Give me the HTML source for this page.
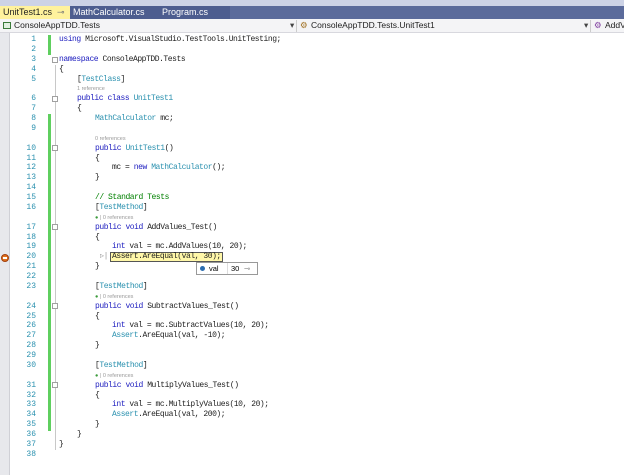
<!DOCTYPE html>
<html><head><meta charset="utf-8"><style>
*{margin:0;padding:0;box-sizing:border-box}
body{width:624px;height:475px;overflow:hidden;background:#fff;font-family:"Liberation Sans",sans-serif;position:relative}
.tabbar{position:absolute;left:0;top:0;width:624px;height:19px;background:#5b6b9b}
.tabbar .hi{position:absolute;top:0;left:0;width:624px;height:6px;background:#cdd3e6}
.tab{position:absolute;top:6px;height:13px;font-size:9px;line-height:13px;padding-left:3px;color:#fff}
.nav{position:absolute;top:19px;left:0;width:624px;height:14px;background:#f4f4f6;border-bottom:1px solid #d8d8de;font-size:8.5px;line-height:13px;color:#1e1e1e}
.strip{position:absolute;left:0;top:33px;width:10px;height:442px;background:#e7e8ec;border-right:1px solid #cfd0d6}
.code{position:absolute;left:0;top:35px;width:624px;font-family:"Liberation Mono",monospace;font-size:8px;letter-spacing:-0.45px}
.r{height:9.88px;line-height:9.88px;position:relative;white-space:pre}
.n{position:absolute;left:10px;width:26px;text-align:right;color:#2b91af;letter-spacing:0}
.t{position:absolute;left:59px;color:#1e1e1e}
.ref{font-family:"Liberation Sans",sans-serif;font-size:5.5px;color:#999;letter-spacing:0}
.k{color:#2020c0}.ty{color:#2b91af}.c{color:#008000}
.g{position:absolute;left:48px;width:3px;background:#5fcf5f}
.box{position:absolute;left:52px;width:6px;height:6px;border:1px solid #a0a0a0;background:#fff}
</style></head><body>
<div class="tabbar"><div class="hi"></div>
<div class="tab" style="left:0;width:70px;background:#fff29d;color:#1e1e1e">UnitTest1.cs &nbsp;<span style="color:#777">⊸</span> <span style="color:#444">✕</span></div>
<div class="tab" style="left:70px;width:90px;background:#4d5d8f">MathCalculator.cs</div>
<div class="tab" style="left:160px;width:70px;background:#4d5d8f;padding-left:2px">Program.cs</div>
</div>
<div class="nav">
<span style="position:absolute;left:3px;top:3px;width:8px;height:7px;border:1px solid #3a7a3a;background:#e0f0e0"></span>
<span style="position:absolute;left:14px">ConsoleAppTDD.Tests</span>
<span style="position:absolute;left:290px;color:#444">▾</span>
<span style="position:absolute;left:296px;top:1px;width:1px;height:12px;background:#ccc"></span>
<span style="position:absolute;left:300px;color:#a07020">⚙</span>
<span style="position:absolute;left:311px">ConsoleAppTDD.Tests.UnitTest1</span>
<span style="position:absolute;left:584px;color:#444">▾</span>
<span style="position:absolute;left:590px;top:1px;width:1px;height:12px;background:#ccc"></span>
<span style="position:absolute;left:594px;color:#8040a0">⚙</span>
<span style="position:absolute;left:605px">AddV</span>
</div>
<div class="strip"></div>
<div class="g" style="top:35px;height:20px"></div>
<div class="g" style="top:114px;height:317px"></div>
<div style="position:absolute;left:1px;top:254px;width:8px;height:8px;border-radius:50%;background:#e0701a;border:1px solid #a04010"></div>
<div style="position:absolute;left:3px;top:257px;width:4px;height:2px;background:#fff"></div>
<div style="position:absolute;left:55px;top:65px;width:1px;height:385px;background:#c8c8c8"></div>
<div class="box" style="top:57px"></div><div class="box" style="top:96px"></div><div class="box" style="top:145px"></div>
<div class="box" style="top:224px"></div><div class="box" style="top:303px"></div><div class="box" style="top:382px"></div>
<div style="position:absolute;left:110px;top:252px;width:113px;height:10px;background:#fff7a8;border:1px solid #555"></div>
<div style="position:absolute;left:196px;top:262px;width:62px;height:13px;background:#fff;border:1px solid #999;font-size:7.5px;line-height:11px">
<span style="position:absolute;left:3px;top:3px;width:5px;height:5px;border-radius:50%;background:#2b6cb0"></span>
<span style="position:absolute;left:12px">val</span>
<span style="position:absolute;left:30px;top:0;width:1px;height:11px;background:#ddd"></span>
<span style="position:absolute;left:34px">30</span><span style="position:absolute;left:47px;color:#888">⊸</span></div>
<div class="code">
<div class="r"><span class="n">1</span><span class="t"><span class="k">using</span> Microsoft.VisualStudio.TestTools.UnitTesting;</span></div>
<div class="r"><span class="n">2</span></div>
<div class="r"><span class="n">3</span><span class="t"><span class="k">namespace</span> ConsoleAppTDD.Tests</span></div>
<div class="r"><span class="n">4</span><span class="t">{</span></div>
<div class="r"><span class="n">5</span><span class="t" style="left:77px">[<span class="ty">TestClass</span>]</span></div>
<div class="r"><span class="t" style="left:77px"><span class="ref">1 reference</span></span></div>
<div class="r"><span class="n">6</span><span class="t" style="left:77px"><span class="k">public class</span> <span class="ty">UnitTest1</span></span></div>
<div class="r"><span class="n">7</span><span class="t" style="left:77px">{</span></div>
<div class="r"><span class="n">8</span><span class="t" style="left:95px"><span class="ty">MathCalculator</span> mc;</span></div>
<div class="r"><span class="n">9</span></div>
<div class="r"><span class="t" style="left:95px"><span class="ref">0 references</span></span></div>
<div class="r"><span class="n">10</span><span class="t" style="left:95px"><span class="k">public</span> <span class="ty">UnitTest1</span>()</span></div>
<div class="r"><span class="n">11</span><span class="t" style="left:95px">{</span></div>
<div class="r"><span class="n">12</span><span class="t" style="left:112px">mc = <span class="k">new</span> <span class="ty">MathCalculator</span>();</span></div>
<div class="r"><span class="n">13</span><span class="t" style="left:95px">}</span></div>
<div class="r"><span class="n">14</span></div>
<div class="r"><span class="n">15</span><span class="t" style="left:95px"><span class="c">// Standard Tests</span></span></div>
<div class="r"><span class="n">16</span><span class="t" style="left:95px">[<span class="ty">TestMethod</span>]</span></div>
<div class="r"><span class="t" style="left:95px"><span class="ref"><span style="color:#3a9a3a">●</span> | 0 references</span></span></div>
<div class="r"><span class="n">17</span><span class="t" style="left:95px"><span class="k">public void</span> AddValues_Test()</span></div>
<div class="r"><span class="n">18</span><span class="t" style="left:95px">{</span></div>
<div class="r"><span class="n">19</span><span class="t" style="left:112px"><span class="k">int</span> val = mc.AddValues(10, 20);</span></div>
<div class="r"><span class="n">20</span><span class="t" style="left:100px;color:#999">▹|</span><span class="t" style="left:112px">Assert.AreEqual(val, 30);</span></div>
<div class="r"><span class="n">21</span><span class="t" style="left:95px">}</span></div>
<div class="r"><span class="n">22</span></div>
<div class="r"><span class="n">23</span><span class="t" style="left:95px">[<span class="ty">TestMethod</span>]</span></div>
<div class="r"><span class="t" style="left:95px"><span class="ref"><span style="color:#3a9a3a">●</span> | 0 references</span></span></div>
<div class="r"><span class="n">24</span><span class="t" style="left:95px"><span class="k">public void</span> SubtractValues_Test()</span></div>
<div class="r"><span class="n">25</span><span class="t" style="left:95px">{</span></div>
<div class="r"><span class="n">26</span><span class="t" style="left:112px"><span class="k">int</span> val = mc.SubtractValues(10, 20);</span></div>
<div class="r"><span class="n">27</span><span class="t" style="left:112px"><span class="ty">Assert</span>.AreEqual(val, -10);</span></div>
<div class="r"><span class="n">28</span><span class="t" style="left:95px">}</span></div>
<div class="r"><span class="n">29</span></div>
<div class="r"><span class="n">30</span><span class="t" style="left:95px">[<span class="ty">TestMethod</span>]</span></div>
<div class="r"><span class="t" style="left:95px"><span class="ref"><span style="color:#3a9a3a">●</span> | 0 references</span></span></div>
<div class="r"><span class="n">31</span><span class="t" style="left:95px"><span class="k">public void</span> MultiplyValues_Test()</span></div>
<div class="r"><span class="n">32</span><span class="t" style="left:95px">{</span></div>
<div class="r"><span class="n">33</span><span class="t" style="left:112px"><span class="k">int</span> val = mc.MultiplyValues(10, 20);</span></div>
<div class="r"><span class="n">34</span><span class="t" style="left:112px"><span class="ty">Assert</span>.AreEqual(val, 200);</span></div>
<div class="r"><span class="n">35</span><span class="t" style="left:95px">}</span></div>
<div class="r"><span class="n">36</span><span class="t" style="left:77px">}</span></div>
<div class="r"><span class="n">37</span><span class="t">}</span></div>
<div class="r"><span class="n">38</span></div>
</div>
</body></html>
